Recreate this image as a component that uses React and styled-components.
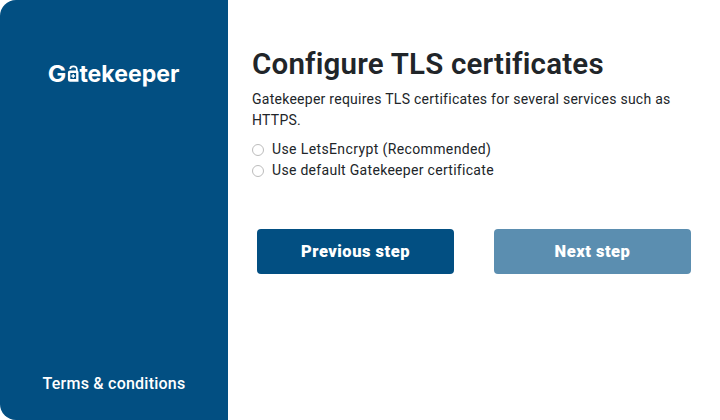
import React from 'react';
import styled, { createGlobalStyle } from 'styled-components';

const GlobalStyle = createGlobalStyle`
  *, *::before, *::after { box-sizing: border-box; }
  body { margin: 0; background: #fff; color: #212529; font-family: Roboto, "Open Sans", sans-serif; }
`;

const Page = styled.div`
  display: flex;
  width: 720px;
  height: 420px;
  overflow: hidden;
`;

const Sidebar = styled.aside`
  display: flex;
  flex-direction: column;
  align-items: center;
  justify-content: space-between;
  width: 228px;
  padding: 60px 0 26px;
  background: #024f82;
  border-radius: 16px 0 0 16px;
`;

const Terms = styled.a`
  color: #fff;
  font-size: 16px;
  line-height: 20px;
  font-weight: 500;
  letter-spacing: ${(p) => p.$tracking};
  white-space: nowrap;
`;

const Content = styled.main`
  flex: 1;
  padding: 47px 24px 0;
`;

const Title = styled.h1`
  margin: 0 0 7px;
  font-size: 29.5px;
  line-height: 35px;
  font-weight: 600;
  letter-spacing: 0.2px;
  white-space: nowrap;
`;

const Intro = styled.p`
  margin: 0 0 7px;
  font-size: 14px;
  line-height: 21px;
  font-weight: 450;
  letter-spacing: 0.26px;
`;

const Option = styled.label`
  display: flex;
  align-items: center;
  gap: 8px;
  height: 21px;
  font-size: 14px;
  font-weight: 450;
  white-space: nowrap;
  letter-spacing: ${(p) => p.$tracking};
`;

const Radio = styled.input`
  appearance: none;
  flex: none;
  width: 12px;
  height: 12px;
  margin: 2px 0 0;
  border: 1px solid #bcbcbc;
  border-radius: 50%;
  background: #fff;
`;

const Actions = styled.div`
  display: flex;
  gap: 40px;
  margin: 49px 0 0 5px;
`;

const Button = styled.button`
  width: 197px;
  height: 45px;
  padding: 0;
  border: 0;
  border-radius: 4px;
  background: #024f82;
  color: #fff;
  font: 900 16.5px Roboto, sans-serif;
  letter-spacing: ${(p) => p.$tracking};
  &:disabled { background: #5b8eb0; }
`;

function Logo() {
  return (
    <svg width="140" height="36" viewBox="44 60 140 36" role="img" aria-label="Gatekeeper" fill="#fff">
      <g fontFamily="Inter, sans-serif" fontWeight="650">
        <text x="47.8" y="81.5" fontSize="22.5" textLength="18.5" lengthAdjust="spacingAndGlyphs">G</text>
        <text x="79.4" y="81.5" fontSize="23.5" textLength="100" lengthAdjust="spacingAndGlyphs">tekeeper</text>
      </g>
      <path d="M70.2 68.9c0-1.7 1.2-2.6 3.1-2.6s3.5 1 3.5 3.2v2" fill="none" stroke="#fff" strokeWidth="1.7" />
      <path fillRule="evenodd" d="M70 70.4h6.8q1.7 0 1.7 1.7v9.6h-8.4q-2.2 0-2.2-2.2v-6.9q0-2.2 2.1-2.2zM70.3 73v6h5.8v-6z" />
      <path d="M73.2 74.1v3.8M71.3 76h3.8" stroke="#fff" strokeWidth="1.3" />
    </svg>
  );
}

export default function App() {
  return (
    <>
      <GlobalStyle />
      <Page>
        <Sidebar>
          <Logo />
          <Terms $tracking="0.24px">Terms &amp; conditions</Terms>
        </Sidebar>
        <Content>
          <Title>Configure TLS certificates</Title>
          <Intro>Gatekeeper requires TLS certificates for several services such as HTTPS.</Intro>
          <Option $tracking="0.38px"><Radio type="radio" name="certificate" />Use LetsEncrypt (Recommended)</Option>
          <Option $tracking="0.3px"><Radio type="radio" name="certificate" />Use default Gatekeeper certificate</Option>
          <Actions>
            <Button $tracking="0.5px">Previous step</Button>
            <Button $tracking="0.5px" disabled>Next step</Button>
          </Actions>
        </Content>
      </Page>
    </>
  );
}
